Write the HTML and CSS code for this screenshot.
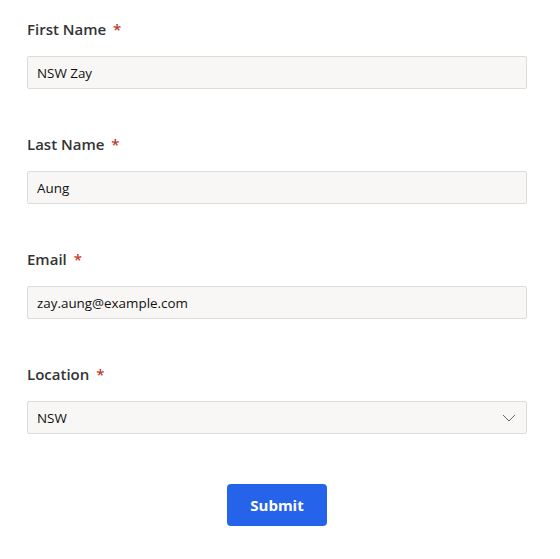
FILE: index.html
```html
<!DOCTYPE html>
<html>
<head>
<meta charset="utf-8">
<link rel="stylesheet" href="styles.css">
</head>
<body>
<form class="form">
  <div class="field">
    <label class="label">First Name <span class="req">*</span></label>
    <input class="input" type="text" value="NSW Zay">
  </div>
  <div class="field">
    <label class="label">Last Name <span class="req">*</span></label>
    <input class="input" type="text" value="Aung">
  </div>
  <div class="field">
    <label class="label">Email <span class="req">*</span></label>
    <input class="input" type="text" value="zay.aung@example.com">
  </div>
  <div class="field">
    <label class="label">Location <span class="req">*</span></label>
    <div class="select">
      <span>NSW</span>
      <svg class="chev" width="14" height="8" viewBox="0 0 14 8"><path d="M1 1l6 6 6-6" fill="none" stroke="#666" stroke-width="1"/></svg>
    </div>
  </div>
  <div class="actions">
    <button class="btn" type="button">Submit</button>
  </div>
</form>
</body>
</html>
```
FILE: styles.css
```css
* { box-sizing: border-box; }
body {
  margin: 0;
  background: #fff;
  font-family: "Open Sans", "Noto Sans", sans-serif;
  color: #222;
}
.form {
  padding: 18px 33px 0 27px;
  display: flex;
  flex-direction: column;
  gap: 44px;
}
.field {
  display: flex;
  flex-direction: column;
  gap: 16px;
}
.label {
  font-size: 15px;
  font-weight: 600;
  color: #333;
  line-height: 22px;
}
.req {
  color: #c0392b;
  margin-left: 3px;
}
.input, .select {
  width: 500px;
  height: 33px;
  border: 1px solid #dedcda;
  background: #f8f7f5;
  border-radius: 2px;
  padding: 0 9px;
  font-family: inherit;
  font-size: 13.4px;
  color: #111;
  outline: none;
}
.select {
  display: flex;
  align-items: center;
  justify-content: space-between;
  padding-right: 10px;
}
.actions {
  display: flex;
  justify-content: center;
  padding-top: 6px;
}
.btn {
  width: 100px;
  height: 42px;
  background: #2563eb;
  color: #fff;
  border: none;
  border-radius: 4px;
  font-family: inherit;
  font-size: 15px;
  font-weight: 700;
}
```
